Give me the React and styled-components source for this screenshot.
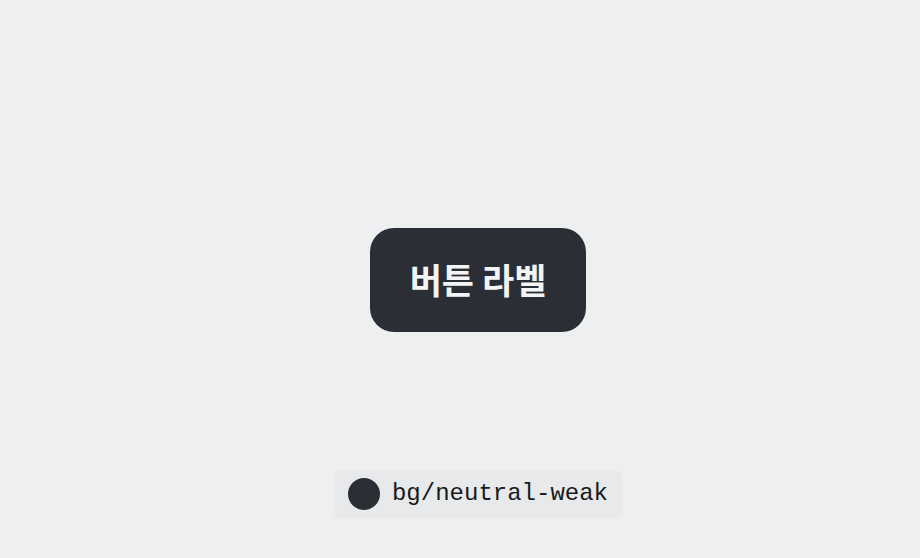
import React from 'react';
import styled, { createGlobalStyle } from 'styled-components';

const GlobalStyle = createGlobalStyle`
  * {
    box-sizing: border-box;
  }

  body {
    margin: 0;
    background: #eeeff1;
  }
`;

const Canvas = styled.main`
  display: grid;
  grid-template-rows: 1fr auto 1fr;
  justify-items: center;
  min-height: 100vh;
  padding: 2px 0 0 36px;
`;

const ActionButton = styled.button`
  grid-row: 2;
  padding: 27px 40px 29px;
  border: none;
  border-radius: 24px;
  background: #2b2e35;
  color: #f3f4f5;
  font-family: 'Noto Sans CJK KR', sans-serif;
  font-size: 35px;
  font-weight: 700;
  line-height: 48px;
  white-space: nowrap;
  cursor: pointer;
`;

const TokenTag = styled.div`
  grid-row: 3;
  align-self: end;
  display: flex;
  align-items: center;
  gap: 12px;
  margin-bottom: 40px;
  padding: 8px 14px;
  border-radius: 6px;
  background: #e8e9eb;
`;

const Swatch = styled.span`
  width: 32px;
  height: 32px;
  border-radius: 50%;
  background: ${props => props.$color};
`;

const TokenName = styled.code`
  color: #18191b;
  font-family: 'Liberation Mono', monospace;
  font-size: 24px;
  line-height: 32px;
`;

const App = () => (
  <>
    <GlobalStyle />
    <Canvas>
      <ActionButton type="button">버튼 라벨</ActionButton>
      <TokenTag>
        <Swatch $color="#2b2e35" />
        <TokenName>bg/neutral-weak</TokenName>
      </TokenTag>
    </Canvas>
  </>
);

export default App;
